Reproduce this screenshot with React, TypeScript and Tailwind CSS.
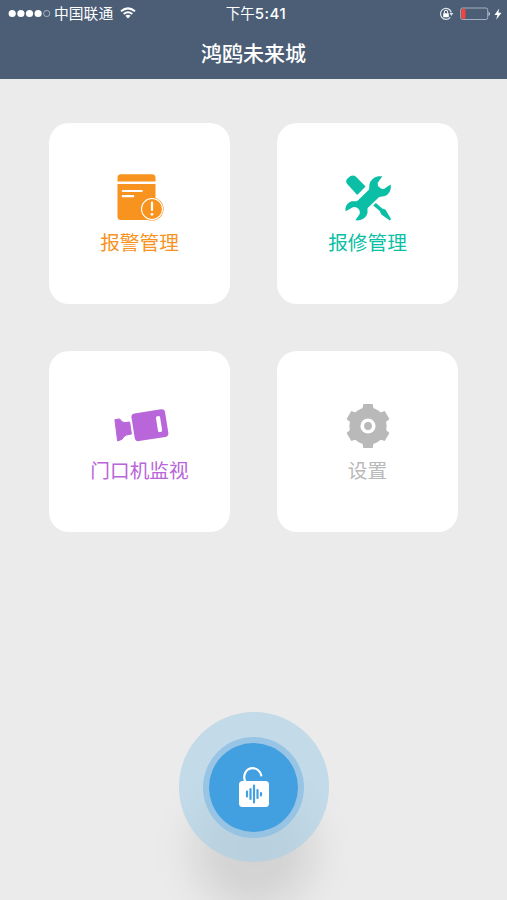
import type { ReactNode } from 'react'

interface MenuItem {
  label: string
  color: string
  icon: ReactNode
}

function AlarmIcon() {
  return (
    <svg width="48" height="48" viewBox="0 0 48 48">
      <path d="M1.5 8.5V5Q1.5 1.3 5 1.3H36Q39.5 1.3 39.5 5V8.5Z" fill="#f7931e" />
      <path d="M1.5 11H39.5V47H5Q1.5 47 1.5 43.5Z" fill="#f7931e" />
      <path d="M6.8 18H25.8M6.8 23.2H17.2" stroke="#fff" strokeWidth="2.2" strokeLinecap="round" />
      <circle cx="36" cy="36" r="11.6" fill="#f7931e" />
      <circle cx="36" cy="36" r="10.5" fill="none" stroke="#fff" strokeWidth="1.1" />
      <path d="M36 29.5V37" stroke="#fff" strokeWidth="2.2" strokeLinecap="round" />
      <circle cx="36" cy="41.3" r="1.4" fill="#fff" />
    </svg>
  )
}

function RepairIcon() {
  return (
    <svg className="overflow-visible" width="48" height="48" viewBox="0.6 0.4 48 48" fill="#0abfa5">
      <path d="M3.6 11.2Q1.8 8.5 3.8 6.1L6.8 3.6Q10 2 12.6 4.1L22.2 14L13.8 22.3Z" />
      <path d="M38.8 3.8L34.2 10.3Q34 13.5 36.2 15Q38 17 40.5 16.3L47.2 11.8C48.4 17 45.5 21.5 42 23.2C40 24.2 37.5 23.5 35.5 24.7L24.3 35.5C23.6 37.5 24.8 39.5 23.6 42C21.6 46.3 17 48.4 12 47.7L16.3 41.5Q17.3 38.5 15 36.2Q12.5 33.5 9.5 34.6L2.2 38.6C1.4 34 3.8 30.6 7.5 29C9.8 28 12.5 29.6 14.7 27.6L25.5 17.2C26.4 15 25.3 12.8 26.6 10C28.6 5.6 33.5 2.6 38.8 3.8Z" />
      <path d="M29.8 32.9L32.5 30.4L38.8 36L42 37L47.6 46.5L46.5 47.8L37.9 41.8L36.4 38.4Z" />
    </svg>
  )
}

function CameraIcon() {
  return (
    <svg width="58" height="40" viewBox="0 0 58 40" fill="#b866d9">
      <g transform="rotate(-9 38.7 20.2)">
        <rect x="21.9" y="6.2" width="34" height="28" rx="3.6" />
        <rect x="46" y="12.6" width="4.2" height="16" rx="1.6" fill="#fff" />
      </g>
      <path d="M3.9 14.7L8.6 13.9Q11 17.8 14 17.6L18.6 17L20.4 29L15.6 30Q12.5 31 11 34.3L6.6 36Z" stroke="#b866d9" strokeLinejoin="round" />
    </svg>
  )
}

function GearIcon() {
  const teeth = [0, 60, 120]
  return (
    <svg width="48" height="48" viewBox="0 0 48 48" fill="#b9b9b9">
      <circle cx="24" cy="25" r="18.6" />
      {teeth.map((angle) => (
        <path key={angle} d="M19.3 3H28.7L29.6 8.2V41.8L28.7 47H19.3L18.4 41.8V8.2Z" transform={`rotate(${angle} 24 25)`} />
      ))}
      <circle cx="24" cy="25" r="7.6" fill="#fff" />
      <circle cx="24" cy="25" r="3.9" />
    </svg>
  )
}

function UnlockIcon() {
  return (
    <svg width="34" height="44" viewBox="0 0 34 44">
      <path d="M8.5 17C5.5 11.5 8.2 3.8 15 3.2C19.5 2.8 23.3 6 24.3 10.5" fill="none" stroke="#fff" strokeWidth="2.2" strokeLinecap="round" />
      <rect x="2" y="16" width="30" height="26" rx="3.5" fill="#fff" />
      <path d="M10 26.5V31.5M13.5 24V34M17 20.5V37.5M20.5 25V33M24 28V30.5" stroke="#429fe0" strokeWidth="2.2" strokeLinecap="round" />
    </svg>
  )
}

function StatusBar() {
  return (
    <div className="h-7 px-2 grid grid-cols-[1fr_auto_1fr] items-center text-[14px]">
      <div className="flex items-center">
        <svg width="43" height="10" viewBox="0 0 43 10" fill="#fff">
          <circle cx="4.2" cy="4.5" r="3.6" />
          <circle cx="12.9" cy="4.5" r="3.6" />
          <circle cx="21.5" cy="4.5" r="3.6" />
          <circle cx="30.1" cy="4.5" r="3.6" />
          <circle cx="38.7" cy="4.5" r="3.1" fill="none" stroke="#bcc6d1" strokeWidth=".8" />
        </svg>
        <span className="ml-[3px] text-[14.8px]">中国联通</span>
        <svg className="ml-[7px] -mt-[2px]" width="16" height="12" viewBox="0 0 16 12" fill="none" stroke="#fff" strokeWidth="2">
          <path d="M1 4.3Q8-1.6 15 4.3M3.7 7Q8 3.5 12.3 7" />
          <path d="M8 11.4L5.4 8.8Q8 6.8 10.6 8.8Z" fill="#fff" stroke="none" />
        </svg>
      </div>
      <div className="flex items-baseline pl-[5px] pt-px">
        <span className="text-[14.5px]">下午</span>
        <span className="font-['Inter',sans-serif] font-medium text-[15px] tracking-[0.5px]">5:41</span>
      </div>
      <div className="flex items-center justify-end -mr-[3px]">
        <svg width="15" height="14" viewBox="0 0 15 14">
          <path d="M11.3 10.3A5.5 5.5 0 1 1 12.3 5.5" fill="none" stroke="#dce2e8" strokeWidth="1.2" />
          <path d="M10.5 6H14.3L12.4 9Z" fill="#dce2e8" />
          <rect x="4.2" y="6.2" width="5.6" height="4" rx=".5" fill="#fff" />
          <path d="M5.3 6.5V5A1.7 1.7 0 0 1 8.7 5V6.5" fill="none" stroke="#fff" />
        </svg>
        <svg className="ml-[6px]" width="31" height="14" viewBox="0 0 31 14">
          <rect x=".7" y="1" width="27" height="11.5" rx="1.8" fill="none" stroke="#a5b0bf" />
          <rect x="1.5" y="1.8" width="4" height="10" rx="1" fill="#f5443b" />
          <path d="M28.6 4.4Q31.2 6.7 28.6 9.2Z" fill="#dce2e8" />
        </svg>
        <svg className="ml-[3px]" width="8" height="12" viewBox="0 0 8 12" fill="#fff">
          <path d="M5.2.5L.5 7H3.4L2.2 11.7L7.5 4.7H4.4Z" />
        </svg>
      </div>
    </div>
  )
}

const menu: MenuItem[] = [
  { label: '报警管理', color: 'text-[#f7931e]', icon: <AlarmIcon /> },
  { label: '报修管理', color: 'text-[#0abfa5]', icon: <RepairIcon /> },
  { label: '门口机监视', color: 'text-[#b866d9]', icon: <CameraIcon /> },
  { label: '设置', color: 'text-[#b9b9b9]', icon: <GearIcon /> },
]

export default function App() {
  return (
    <div className="h-[900px] w-[507px] overflow-hidden bg-[#ebebeb] flex flex-col font-['Liberation_Sans','Noto_Sans_CJK_SC',sans-serif]">
      <header className="h-[79px] shrink-0 bg-[#4b5e76] text-white">
        <StatusBar />
        <h1 className="h-[51px] flex items-center justify-center text-[21px] font-medium">鸿鸥未来城</h1>
      </header>

      <main className="grow flex flex-col items-center pt-11">
        <div className="grid grid-cols-2 gap-[47px]">
          {menu.map((item) => (
            <button key={item.label} className="size-[181px] rounded-[20px] bg-white flex flex-col items-center pt-[50px]">
              <span className="h-12 flex items-center justify-center">{item.icon}</span>
              <span className={`mt-[7px] text-[19.7px] leading-[30px] ${item.color}`}>{item.label}</span>
            </button>
          ))}
        </div>

        {/* Unlock button with its halo and soft shadow */}
        <div className="relative mt-[180px]">
          <div className="absolute left-[15px] top-[78px] size-[120px] rounded-full bg-black/10 blur-[20px]" />
          <button className="relative size-[150px] rounded-full bg-[#a8cfe6]/60 flex items-center justify-center">
            <span className="size-[101px] rounded-full bg-[#90c1e4]/85 flex items-center justify-center">
              <span className="size-[89px] rounded-full bg-[#429fe0] flex items-center justify-center">
                <UnlockIcon />
              </span>
            </span>
          </button>
        </div>
      </main>
    </div>
  )
}
